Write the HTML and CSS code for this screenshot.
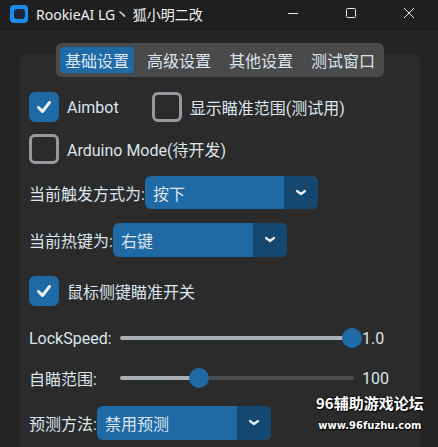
FILE: index.html
```html
<!DOCTYPE html>
<html>
<head>
  <meta charset="UTF-8">
  <title>RookieAI LG丶 狐小明二改</title>
  <link rel="stylesheet" href="styles.css">
</head>
<body>

  <header class="titlebar">
    <svg class="app-icon" width="18" height="18" viewBox="0 0 18 18">
      <rect x="0" y="0" width="18" height="18" rx="4" fill="#1a8cf0"/>
      <rect x="4" y="4" width="11" height="10" rx="3" fill="#1c2733"/>
    </svg>
    <span class="title">RookieAI LG丶 狐小明二改</span>
    <div class="controls">
      <svg width="12" height="12" viewBox="0 0 12 12"><path d="M1 6.5h10" stroke="#e8e8e8" stroke-width="1"/></svg>
      <svg width="12" height="12" viewBox="0 0 12 12"><rect x="1.5" y="1.5" width="9" height="9" rx="1" fill="none" stroke="#e8e8e8" stroke-width="1"/></svg>
      <svg width="12" height="12" viewBox="0 0 12 12"><path d="M1 1l10 10M11 1L1 11" stroke="#e8e8e8" stroke-width="1"/></svg>
    </div>
  </header>

  <main class="client">
    <nav class="segmented">
      <span class="seg active">基础设置</span>
      <span class="seg">高级设置</span>
      <span class="seg">其他设置</span>
      <span class="seg">测试窗口</span>
    </nav>

    <section class="panel">
      <div class="row checks r1">
        <label class="check"><span class="box on"><svg width="20" height="20" viewBox="0 0 20 20"><path d="M4.5 10.5l4 4 7-9" fill="none" stroke="#e8eef4" stroke-width="3" stroke-linecap="round" stroke-linejoin="round"/></svg></span>Aimbot</label>
        <label class="check"><span class="box"></span>显示瞄准范围(测试用)</label>
      </div>
      <div class="row checks r2">
        <label class="check"><span class="box"></span>Arduino Mode(待开发)</label>
      </div>
      <div class="row r3">
        <span class="label">当前触发方式为:</span>
        <div class="menu w173"><span class="menu-text">按下</span><span class="menu-btn"><svg width="12" height="8" viewBox="0 0 12 8"><path d="M2 2l4 3 4-3" fill="none" stroke="#e8eef4" stroke-width="2.2" stroke-linecap="round" stroke-linejoin="round"/></svg></span></div>
      </div>
      <div class="row r4">
        <span class="label">当前热键为:</span>
        <div class="menu w174"><span class="menu-text">右键</span><span class="menu-btn"><svg width="12" height="8" viewBox="0 0 12 8"><path d="M2 2l4 3 4-3" fill="none" stroke="#e8eef4" stroke-width="2.2" stroke-linecap="round" stroke-linejoin="round"/></svg></span></div>
      </div>
      <div class="row checks r5">
        <label class="check"><span class="box on"><svg width="20" height="20" viewBox="0 0 20 20"><path d="M4.5 10.5l4 4 7-9" fill="none" stroke="#e8eef4" stroke-width="3" stroke-linecap="round" stroke-linejoin="round"/></svg></span>鼠标侧键瞄准开关</label>
      </div>
      <div class="row slider-row r6">
        <span class="label">LockSpeed:</span>
        <div class="slider">
          <div class="track"><div class="fill" style="width: 100%"></div></div>
          <span class="knob" style="left: 222px"></span>
        </div>
        <span class="value">1.0</span>
      </div>
      <div class="row slider-row r7">
        <span class="label">自瞄范围:</span>
        <div class="slider">
          <div class="track"><div class="fill" style="width: 34%"></div></div>
          <span class="knob" style="left: 69px"></span>
        </div>
        <span class="value">100</span>
      </div>
      <div class="row r8">
        <span class="label">预测方法:</span>
        <div class="menu w174"><span class="menu-text">禁用预测</span><span class="menu-btn"><svg width="12" height="8" viewBox="0 0 12 8"><path d="M2 2l4 3 4-3" fill="none" stroke="#e8eef4" stroke-width="2.2" stroke-linecap="round" stroke-linejoin="round"/></svg></span></div>
      </div>
    </section>
  </main>

  <div class="watermark">
    <div class="wm-big">96辅助游戏论坛</div>
    <div class="wm-small">www.96fuzhu.com</div>
  </div>

</body>
</html>
```

FILE: styles.css
```css
html, body { margin: 0; padding: 0; }
body { width: 438px; height: 447px; overflow: hidden; background: #242424; color: #dce4ee; font-family: Roboto, "Noto Sans CJK SC", sans-serif; font-size: 16px; position: relative; }

.titlebar { height: 31px; background: #1f1f1f; display: flex; align-items: center; border-bottom: 1px solid #2a2a2a; }
.app-icon { margin: 0 8px 4px 10px; }
.title { font-family: "Noto Sans", "Noto Sans CJK SC", sans-serif; font-size: 14px; color: #f0f0f0; margin-bottom: 4px; }
.controls { margin-left: auto; display: flex; gap: 46px; margin-right: 23px; margin-bottom: 5px; }

.client { padding: 11px 18px 0 20px; }
.segmented { width: 320px; margin: 0 auto -23px; position: relative; z-index: 1; display: flex; gap: 8px; padding: 4px; background: #4a4a4a; border-radius: 6px; }
.seg { width: 74px; height: 26px; line-height: 26px; text-align: center; border-radius: 4px; font-size: 16px; color: #dce4ee; font-family: "Noto Sans CJK SC", sans-serif; }
.seg.active { background: #1f6aa5; }

.panel { background: #2b2b2b; border-radius: 8px 8px 0 0; height: 393px; padding: 38px 9px 0; box-sizing: border-box; }

.row { display: flex; align-items: center; }
.checks { height: 30px; gap: 0; }
.r2 { margin-top: 12px; }
.r3 { margin-top: 12px; height: 33px; }
.r4 { margin-top: 14px; height: 34px; }
.r5 { margin-top: 19px; }
.r6 { margin-top: 22px; height: 20px; }
.r7 { margin-top: 20px; height: 20px; }
.r8 { margin-top: 18px; height: 34px; }

.check { display: flex; align-items: center; gap: 8px; }
.check + .check { margin-left: 33px; }
.box { width: 30px; height: 30px; box-sizing: border-box; border: 3px solid #949a9f; border-radius: 6px; display: flex; align-items: center; justify-content: center; }
.box.on { background: #1f6aa5; border-color: #1f6aa5; }

.label { white-space: nowrap; }
.menu { display: flex; height: 100%; border-radius: 6px; overflow: hidden; background: #1f6aa5; }
.w173 { width: 173px; }
.w174 { width: 174px; }
.menu-text { flex: 1; padding-left: 8px; display: flex; align-items: center; }
.menu-btn { width: 34px; background: #144870; display: flex; align-items: center; justify-content: center; }

.slider-row .label { width: 91px; }
.slider { position: relative; width: 240px; height: 20px; display: flex; align-items: center; }
.track { width: 234px; height: 4px; border-radius: 2px; background: #4a4d50; overflow: hidden; }
.fill { height: 100%; background: #aab0b5; }
.knob { position: absolute; top: 0; width: 20px; height: 20px; border-radius: 50%; background: #1f6aa5; }
.value { margin-left: 2px; }

.watermark { position: absolute; left: 316px; top: 394px; text-align: center; color: #fff; font-weight: bold; font-family: "Noto Sans CJK SC", sans-serif; text-shadow: 0 0 2px #000, 1px 1px 1px #000; }
.wm-big { font-size: 15px; line-height: 18px; letter-spacing: 0; }
.wm-small { font-family: "DejaVu Sans", sans-serif; font-size: 10px; line-height: 14px; margin-top: 7px; }
```
